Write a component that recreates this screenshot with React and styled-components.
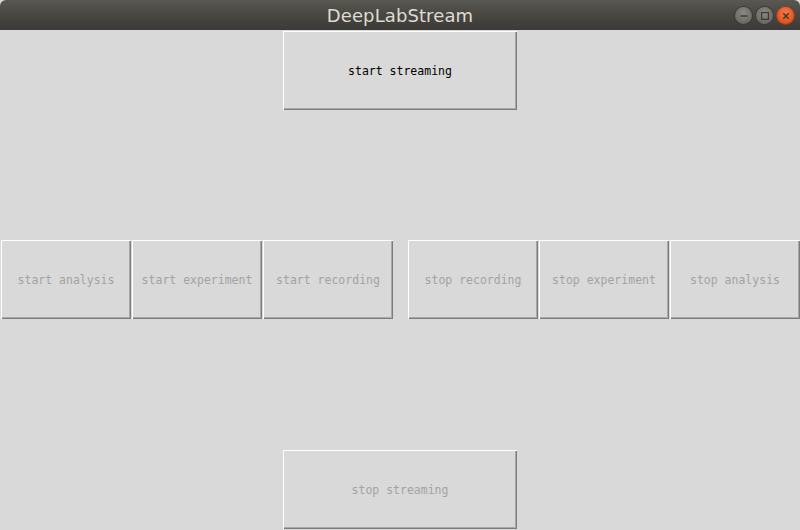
import React from 'react';
import styled, { createGlobalStyle } from 'styled-components';

const GlobalStyle = createGlobalStyle`
    html, body {
        margin: 0;
        padding: 0;
        background: #d9d9d9;
    }
    body {
        width: 800px;
        height: 530px;
        overflow: hidden;
    }
`;

const App = () => {
    return (
        <StyledWindow>
            <GlobalStyle />
            <StyledTitleBar>
                <StyledTitle>DeepLabStream</StyledTitle>
                <StyledControls>
                    <StyledCircle>
                        <svg width="16" height="16" viewBox="0 0 16 16">
                            <path d="M4.5 8h7" stroke="#3a3935" strokeWidth="1.4" />
                        </svg>
                    </StyledCircle>
                    <StyledCircle>
                        <svg width="16" height="16" viewBox="0 0 16 16">
                            <rect x="4.6" y="4.6" width="6.8" height="6.8" fill="none" stroke="#3a3935" strokeWidth="1.2" />
                        </svg>
                    </StyledCircle>
                    <StyledCircle close>
                        <svg width="16" height="16" viewBox="0 0 16 16">
                            <path d="M5.3 5.3l5.4 5.4M10.7 5.3l-5.4 5.4" stroke="#3a3935" strokeWidth="1.4" />
                        </svg>
                    </StyledCircle>
                </StyledControls>
            </StyledTitleBar>
            <StyledContent>
                <StyledWideBtn active>start streaming</StyledWideBtn>
                <StyledRow>
                    <StyledGroup>
                        <StyledBtn>start analysis</StyledBtn>
                        <StyledBtn>start experiment</StyledBtn>
                        <StyledBtn>start recording</StyledBtn>
                    </StyledGroup>
                    <StyledGroup>
                        <StyledBtn>stop recording</StyledBtn>
                        <StyledBtn>stop experiment</StyledBtn>
                        <StyledBtn>stop analysis</StyledBtn>
                    </StyledGroup>
                </StyledRow>
                <StyledWideBtn>stop streaming</StyledWideBtn>
            </StyledContent>
        </StyledWindow>
    );
};

export default App;

const StyledWindow = styled.div`
    display: flex;
    flex-direction: column;
    width: 800px;
    height: 530px;
    background-color: #d9d9d9;
`;

const StyledTitleBar = styled.div`
    position: relative;
    display: flex;
    justify-content: center;
    align-items: center;
    height: 30px;
    flex-shrink: 0;
    background: linear-gradient(to bottom, #5a5852 0%, #4a4843 45%, #3b3a36 100%);
    border-radius: 6px 6px 0 0;
`;

const StyledTitle = styled.span`
    font-family: "DejaVu Sans", "Noto Sans", sans-serif;
    font-size: 18px;
    color: #dfdbd2;
    letter-spacing: 0.1px;
    padding-top: 1px;
`;

const StyledControls = styled.div`
    position: absolute;
    right: 6px;
    top: 7px;
    display: flex;
    gap: 4px;
`;

const StyledCircle = styled.div`
    display: flex;
    align-items: center;
    justify-content: center;
    width: 17px;
    height: 17px;
    border-radius: 50%;
    background: ${p => p.close
        ? 'radial-gradient(circle at 50% 35%, #f37a4a, #e2531f 70%)'
        : 'radial-gradient(circle at 50% 35%, #8a8984, #6b6a65 70%)'};
    box-shadow: 0 0 0 1px ${p => p.close ? '#a73c14' : '#3b3a36'};
`;

const StyledContent = styled.div`
    flex: 1;
    display: flex;
    flex-direction: column;
    justify-content: space-between;
    align-items: center;
    padding: 1px 0 1px;
`;

const StyledRow = styled.div`
    display: flex;
    justify-content: space-between;
    width: 100%;
    padding: 0 0 1px 1px;
    box-sizing: border-box;
`;

const StyledGroup = styled.div`
    display: flex;
    gap: 1px;
`;

const StyledBtn = styled.div`
    display: flex;
    align-items: center;
    justify-content: center;
    box-sizing: border-box;
    width: 130px;
    height: 79px;
    background-color: #d9d9d9;
    box-shadow: inset 1px 1px 0 #ffffff, inset -1px -1px 0 #7c7c7c, inset -2px -2px 0 #a9a9a9;
    font-family: "DejaVu Sans Mono", "Liberation Mono", monospace;
    font-size: 11.5px;
    color: ${p => p.active ? '#000000' : '#a3a3a3'};
    white-space: nowrap;
`;

const StyledWideBtn = styled(StyledBtn)`
    width: 234px;
`;
